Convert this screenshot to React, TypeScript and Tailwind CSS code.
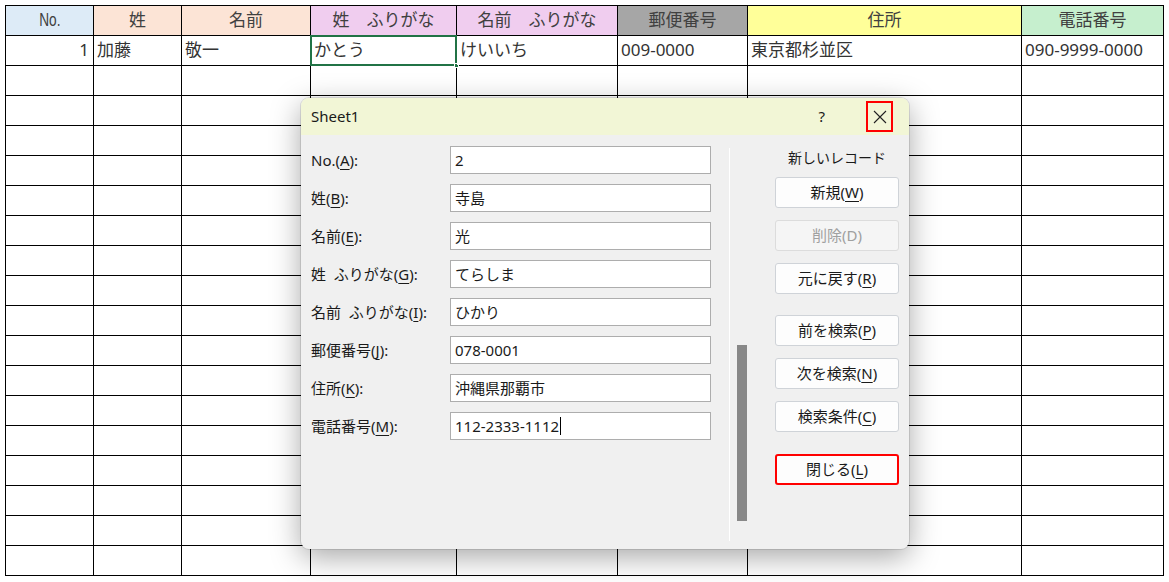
import React from "react";

const FONT = { fontFamily: '"Noto Sans", "Noto Sans CJK JP", sans-serif' };

const headers: { t: string; bg: string }[] = [
  { t: "No.", bg: "bg-[#ddebf7]" },
  { t: "姓", bg: "bg-[#fce4d6]" },
  { t: "名前", bg: "bg-[#fce4d6]" },
  { t: "姓　ふりがな", bg: "bg-[#f0cdef]" },
  { t: "名前　ふりがな", bg: "bg-[#f0cdef]" },
  { t: "郵便番号", bg: "bg-[#a6a6a6]" },
  { t: "住所", bg: "bg-[#ffff99]" },
  { t: "電話番号", bg: "bg-[#c6efce]" },
];

const row1 = ["1", "加藤", "敬一", "かとう", "けいいち", "009-0000", "東京都杉並区", "090-9999-0000"];

function U({ c }: { c: string }) {
  return <span className="underline underline-offset-[3px]">{c}</span>;
}

const fields: { label: React.ReactNode; value: string; caret?: boolean }[] = [
  { label: <>No.(<U c="A" />):</>, value: "2" },
  { label: <>姓(<U c="B" />):</>, value: "寺島" },
  { label: <>名前(<U c="E" />):</>, value: "光" },
  { label: <>姓&nbsp;&nbsp;ふりがな(<U c="G" />):</>, value: "てらしま" },
  { label: <>名前&nbsp;&nbsp;ふりがな(<U c="I" />):</>, value: "ひかり" },
  { label: <>郵便番号(<U c="J" />):</>, value: "078-0001" },
  { label: <>住所(<U c="K" />):</>, value: "沖縄県那覇市" },
  { label: <>電話番号(<U c="M" />):</>, value: "112-2333-1112", caret: true },
];

function Btn({ children, mt, disabled, red }: { children: React.ReactNode; mt: string; disabled?: boolean; red?: boolean }) {
  return (
    <div
      className={`${mt} h-[31px] w-[124px] flex items-center justify-center rounded-[3px] text-[15px] ${
        red ? "border-2 border-[#ff0000] bg-[#fdfdfd] text-[#1a1a1a]" : disabled ? "border border-[#dcdcdc] bg-[#f5f5f5] text-[#a0a0a0]" : "border border-[#cfd3d8] bg-[#fdfdfd] text-[#1a1a1a]"
      }`}
    >
      {children}
    </div>
  );
}

export default function App() {
  const emptyRows = Array.from({ length: 17 });
  return (
    <div className="relative w-[1169px] h-[582px] overflow-hidden bg-white" style={FONT}>
      <div className="pl-[5px] pt-[5px]">
        <div className="grid grid-cols-[87px_87px_128px_145px_160px_129px_273px_141px] auto-rows-[29px] gap-px bg-black p-px w-max">
          {headers.map((h, i) => (
            <div key={i} className={`${h.bg} flex items-center justify-center pb-[2px] text-[17px] text-[#404040] whitespace-pre`}>
              {i === 0 ? (
                <span className="inline-block scale-x-[0.72] text-[19px] leading-none" style={{ fontFamily: '"Liberation Sans", sans-serif' }}>
                  No.
                </span>
              ) : (
                h.t
              )}
            </div>
          ))}
          {row1.map((t, i) => (
            <div
              key={i}
              className={`relative bg-white flex items-center pb-[1px] text-[17px] text-[#333] whitespace-nowrap ${i === 0 ? "justify-end pr-[4px]" : "pl-[3px]"}`}
            >
              {t}
              {i === 3 && (
                <>
                  <div className="absolute -inset-px border-2 border-[#217346]" />
                  <div className="absolute -right-[3px] -bottom-[3px] w-[5px] h-[5px] bg-[#217346] border border-white" />
                </>
              )}
            </div>
          ))}
          {emptyRows.map((_, r) =>
            headers.map((_, c) => <div key={`${r}-${c}`} className="bg-white" />)
          )}
        </div>
      </div>

      {/* Dialog */}
      <div className="absolute left-[301px] top-[98px] w-[608px] h-[451px] rounded-[8px] overflow-hidden bg-[#f0f0f0] shadow-[0_8px_30px_rgba(0,0,0,0.35)] ring-1 ring-black/10">
        <div className="h-[37px] bg-[#f2f6d6] flex items-center pl-[10px] text-[15px] text-[#1a1a1a]">
          <span>Sheet1</span>
          <span className="ml-auto mr-[41px] text-[15px]">?</span>
          <div className="mr-[16px] w-[27px] h-[31px] border-2 border-[#ff0000] flex items-center justify-center">
            <svg width="14" height="14" viewBox="0 0 14 14">
              <path d="M1 1 L13 13 M13 1 L1 13" stroke="#222" strokeWidth="1.1" fill="none" />
            </svg>
          </div>
        </div>
        <div className="flex h-[414px]">
          <div className="pl-[10px] pt-[11px] flex flex-col gap-[10px]">
            {fields.map((f, i) => (
              <div key={i} className="flex items-center h-[28px]">
                <div className="w-[139px] text-[15px] text-[#1a1a1a] whitespace-nowrap">{f.label}</div>
                <div className="w-[261px] h-[28px] border border-[#adadad] bg-white flex items-center pl-[4px] text-[15px] text-[#1a1a1a]">
                  {f.value}
                  {f.caret && <span className="inline-block w-px h-[18px] bg-black ml-px" />}
                </div>
              </div>
            ))}
          </div>
          <div className="ml-[18px] mt-[13px] mb-[8px] w-px bg-white" />
          <div className="ml-[7px] w-[10px] pt-[210px]">
            <div className="h-[176px] bg-[#888888]" />
          </div>
          <div className="ml-[28px] flex flex-col">
            <div className="mt-[13px] h-[20px] w-[124px] text-center text-[14px] text-[#1a1a1a] leading-[20px]">新しいレコード</div>
            <Btn mt="mt-[9px]">新規(<U c="W" />)</Btn>
            <Btn mt="mt-[12px]" disabled>削除(D)</Btn>
            <Btn mt="mt-[12px]">元に戻す(<U c="R" />)</Btn>
            <Btn mt="mt-[21px]">前を検索(<U c="P" />)</Btn>
            <Btn mt="mt-[12px]">次を検索(<U c="N" />)</Btn>
            <Btn mt="mt-[12px]">検索条件(<U c="C" />)</Btn>
            <Btn mt="mt-[22px]" red>閉じる(<U c="L" />)</Btn>
          </div>
        </div>
      </div>
    </div>
  );
}
